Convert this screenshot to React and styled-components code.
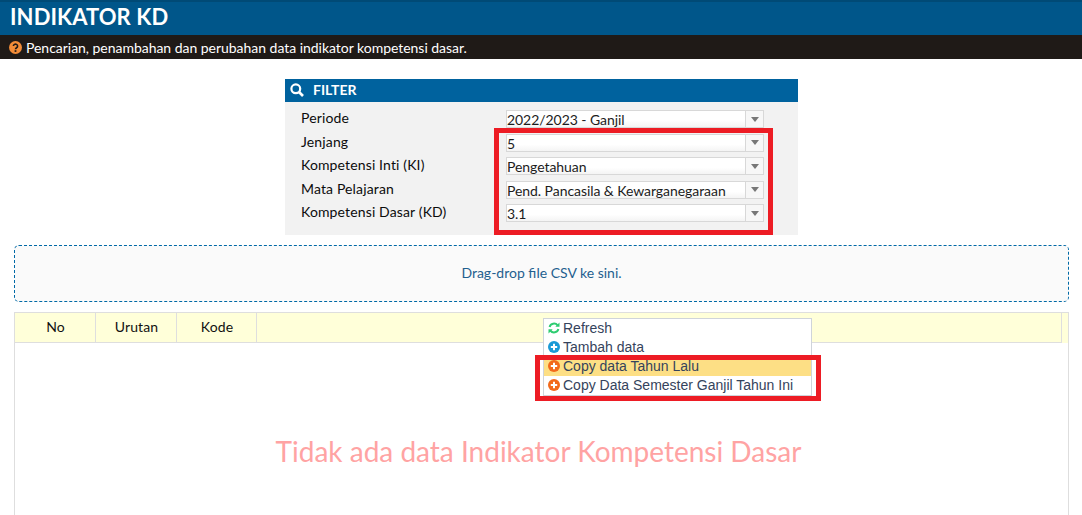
import React from 'react'
import styled, { createGlobalStyle } from 'styled-components'

const GlobalStyle = createGlobalStyle`
  html, body {
    margin: 0;
    height: 515px;
    overflow: hidden;
    background: #fff;
    font-family: Lato, "Liberation Sans", sans-serif;
    color: #111;
  }
  * { box-sizing: border-box; }
`

const TitleBar = styled.div`
  height: 35px;
  padding-left: 10px;
  background: #00568a;
  border-top: 2px solid #004a76;
  color: #fff;
  font-size: 22px;
  font-weight: 700;
  letter-spacing: 0.08px;
  line-height: 29px;
`

const InfoBar = styled.div`
  display: flex;
  align-items: center;
  gap: 4px;
  height: 24px;
  padding-left: 9px;
  background: #1f1a17;
  color: #fff;
  font-size: 14px;
  letter-spacing: -0.03px;
`

const Filter = styled.div`
  position: relative;
  width: 513px;
  height: 156px;
  margin: 20px 0 0 285px;
  background: #f2f2f2;
`

const FilterHead = styled.div`
  display: flex;
  align-items: center;
  gap: 9px;
  height: 23px;
  padding: 0 0 2px 5px;
  background: #00629e;
  color: #fff;
  font-size: 14px;
  font-weight: 700;
`

const FilterBody = styled.div`
  display: flex;
  flex-direction: column;
  gap: 5.5px;
  padding: 5px 34px 0 16px;
`

const FilterRow = styled.div`
  display: flex;
  justify-content: space-between;
  align-items: flex-start;
  height: 18px;
  font-size: 14px;
  line-height: 18px;
`

const FilterLabel = styled.div`
  padding-top: 2px;
  letter-spacing: 0.14px;
  color: #0c0c0c;
`

const Select = styled.div`
  display: flex;
  width: 258px;
  height: 18px;
  margin-top: 3px;
  border: 1px solid #d8d8d8;
  background: linear-gradient(#fff 60%, #f4f4f4);
  font-size: 14px;
  letter-spacing: -0.06px;
  line-height: 17px;
`

const SelectText = styled.div`
  flex: 1;
  color: #1c1c1c;
  white-space: nowrap;
`

const SelectArrow = styled.div`
  display: flex;
  align-items: center;
  justify-content: center;
  width: 18px;
  border-left: 1px solid #d8d8d8;
  background: #f7f7f7;

  &::after {
    content: "";
    border-top: 5px solid #777;
    border-left: 4px solid transparent;
    border-right: 4px solid transparent;
  }
`

const RedBox = styled.div`
  position: absolute;
  border: 5px solid #ed1c24;
  pointer-events: none;
  left: ${(p) => p.$left}px;
  top: ${(p) => p.$top}px;
  width: ${(p) => p.$width}px;
  height: ${(p) => p.$height}px;
`

const DropZone = styled.div`
  display: flex;
  align-items: center;
  justify-content: center;
  height: 57px;
  margin: 10px 13px 0 14px;
  padding-bottom: 2px;
  border: 1px dashed #0069a6;
  border-radius: 5px;
  background: #fafafa;
  color: #1f5f8f;
  font-size: 14px;
`

const Table = styled.div`
  position: relative;
  height: 203px;
  margin: 10px 13px 0 14px;
  border: 1px solid #dedede;
  border-bottom: 0;
`

const HeadRow = styled.div`
  display: flex;
  height: 30px;
  background: #ffffd9;
`

const HeadCell = styled.div`
  display: flex;
  align-items: center;
  justify-content: center;
  width: ${(p) => p.$width}px;
  flex: ${(p) => (p.$width ? 'none' : 1)};
  padding: 0 0 2px 1px;
  border-right: 1px solid #dedede;
  border-bottom: 1px solid #dedede;
  font-size: 14px;
  letter-spacing: 0.1px;
`

const HeadGutter = styled.div`
  width: 6px;
`

const EmptyText = styled.div`
  margin-top: 91px;
  padding-right: 6px;
  text-align: center;
  color: #ffa3a3;
  font-size: 28px;
  line-height: 34px;
`

const Menu = styled.div`
  position: absolute;
  left: 528px;
  top: 5px;
  width: 269px;
  height: 78px;
  border: 1px solid #cfd4da;
  background: #fff;
`

const MenuItem = styled.div`
  display: flex;
  align-items: center;
  gap: 3px;
  height: 19px;
  padding: 0 0 1px 4px;
  background: ${(p) => (p.$active ? '#fddf85' : '#fff')};
  color: #35435c;
  font-family: "Liberation Sans", Arial, sans-serif;
  font-size: 14px;
`

const HelpIcon = () => (
  <svg width="13" height="13" viewBox="0 0 13 13">
    <circle cx="6.5" cy="6.5" r="6.5" fill="#f28c38" />
    <path d="M4.4 5.1a2.1 2 0 1 1 3.2 1.7c-.8.5-1.1.8-1.1 1.5" fill="none" stroke="#1f1a17" strokeWidth="1.6" />
    <rect x="5.6" y="9.2" width="1.8" height="1.7" fill="#1f1a17" />
  </svg>
)

const SearchIcon = () => (
  <svg width="14" height="14" viewBox="0 0 14 14">
    <circle cx="5.8" cy="5.8" r="4.4" fill="none" stroke="#fff" strokeWidth="2.2" />
    <path d="M9 9l4 4" stroke="#fff" strokeWidth="2.6" />
  </svg>
)

const RefreshIcon = () => (
  <svg width="12" height="12" viewBox="0 0 12 12" fill="none" stroke="#2ecc71" strokeWidth="2">
    <path d="M1.6 5a4.5 4.5 0 0 1 8-1.6" />
    <path d="M10.4 7a4.5 4.5 0 0 1-8 1.6" />
    <path d="M11.5 .6v4.2H7.3z" fill="#2ecc71" stroke="none" />
    <path d="M.5 11.4V7.2h4.2z" fill="#2ecc71" stroke="none" />
  </svg>
)

const PlusIcon = ({ color }) => (
  <svg width="12" height="12" viewBox="0 0 12 12">
    <circle cx="6" cy="6" r="6" fill={color} />
    <path d="M6 2.8v6.4M2.8 6h6.4" stroke="#fff" strokeWidth="2" />
  </svg>
)

const filters = [
  ['Periode', '2022/2023 - Ganjil'],
  ['Jenjang', '5'],
  ['Kompetensi Inti (KI)', 'Pengetahuan'],
  ['Mata Pelajaran', 'Pend. Pancasila & Kewarganegaraan'],
  ['Kompetensi Dasar (KD)', '3.1'],
]

const App = () => {
  return (
    <>
      <GlobalStyle />
      <TitleBar>INDIKATOR KD</TitleBar>
      <InfoBar>
        <HelpIcon />
        Pencarian, penambahan dan perubahan data indikator kompetensi dasar.
      </InfoBar>
      <Filter>
        <FilterHead>
          <SearchIcon />
          FILTER
        </FilterHead>
        <FilterBody>
          {filters.map(([label, value]) => (
            <FilterRow key={label}>
              <FilterLabel>{label}</FilterLabel>
              <Select>
                <SelectText>{value}</SelectText>
                <SelectArrow />
              </Select>
            </FilterRow>
          ))}
        </FilterBody>
        <RedBox $left={209} $top={49} $width={279} $height={107} />
      </Filter>
      <DropZone>Drag-drop file CSV ke sini.</DropZone>
      <Table>
        <HeadRow>
          <HeadCell $width={81}>No</HeadCell>
          <HeadCell $width={81}>Urutan</HeadCell>
          <HeadCell $width={80}>Kode</HeadCell>
          <HeadCell />
          <HeadGutter />
        </HeadRow>
        <EmptyText>Tidak ada data Indikator Kompetensi Dasar</EmptyText>
        <Menu>
          <MenuItem><RefreshIcon />Refresh</MenuItem>
          <MenuItem><PlusIcon color="#1b9ad6" />Tambah data</MenuItem>
          <MenuItem $active><PlusIcon color="#f26a1b" />Copy data Tahun Lalu</MenuItem>
          <MenuItem><PlusIcon color="#f26a1b" />Copy Data Semester Ganjil Tahun Ini</MenuItem>
        </Menu>
        <RedBox $left={520} $top={42} $width={286} $height={46} />
      </Table>
    </>
  )
}

export default App
